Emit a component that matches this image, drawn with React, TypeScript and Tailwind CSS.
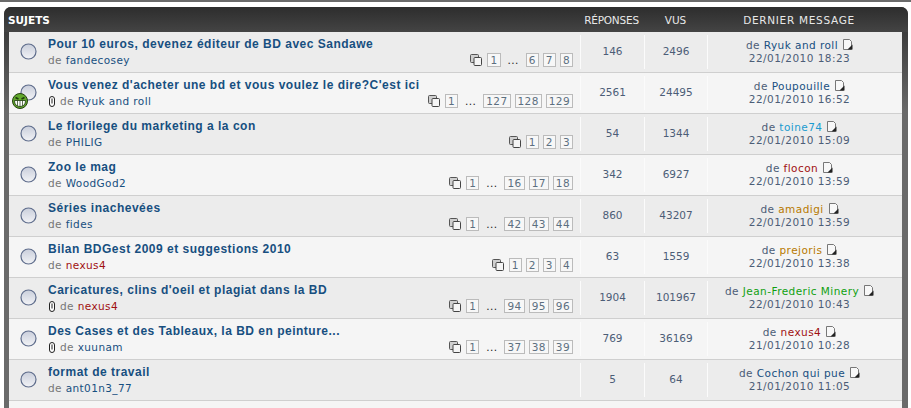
const font = "font-['DejaVu_Sans',sans-serif]";

type Topic = {
  title: string;
  author: string;
  authorColor?: string;
  clip?: boolean;
  pages?: string[];
  replies: string;
  views: string;
  last: string;
  lastColor?: string;
  date: string;
};

const topics: Topic[] = [
  { title: "Pour 10 euros, devenez éditeur de BD avec Sandawe", author: "fandecosey", pages: ["1", "...", "6", "7", "8"], replies: "146", views: "2496", last: "Ryuk and roll", date: "22/01/2010 18:23" },
  { title: "Vous venez d'acheter une bd et vous voulez le dire?C'est ici", author: "Ryuk and roll", clip: true, pages: ["1", "...", "127", "128", "129"], replies: "2561", views: "24495", last: "Poupouille", date: "22/01/2010 16:52" },
  { title: "Le florilege du marketing a la con", author: "PHILIG", pages: ["1", "2", "3"], replies: "54", views: "1344", last: "toine74", lastColor: "text-[#1a9bd0]", date: "22/01/2010 15:09" },
  { title: "Zoo le mag", author: "WoodGod2", pages: ["1", "...", "16", "17", "18"], replies: "342", views: "6927", last: "flocon", lastColor: "text-[#a01010]", date: "22/01/2010 13:59" },
  { title: "Séries inachevées", author: "fides", pages: ["1", "...", "42", "43", "44"], replies: "860", views: "43207", last: "amadigi", lastColor: "text-[#b87a00]", date: "22/01/2010 13:59" },
  { title: "Bilan BDGest 2009 et suggestions 2010", author: "nexus4", authorColor: "text-[#a01010]", pages: ["1", "2", "3", "4"], replies: "63", views: "1559", last: "prejoris", lastColor: "text-[#b87a00]", date: "22/01/2010 13:38" },
  { title: "Caricatures, clins d'oeil et plagiat dans la BD", author: "nexus4", authorColor: "text-[#a01010]", clip: true, pages: ["1", "...", "94", "95", "96"], replies: "1904", views: "101967", last: "Jean-Frederic Minery", lastColor: "text-[#10a010]", date: "22/01/2010 10:43" },
  { title: "Des Cases et des Tableaux, la BD en peinture...", author: "xuunam", clip: true, pages: ["1", "...", "37", "38", "39"], replies: "769", views: "36169", last: "nexus4", lastColor: "text-[#a01010]", date: "21/01/2010 10:28" },
  { title: "format de travail", author: "ant01n3_77", replies: "5", views: "64", last: "Cochon qui pue", date: "21/01/2010 11:05" },
];

function Bullet() {
  return (
    <svg width="17" height="17" viewBox="0 0 17 17">
      <defs>
        <linearGradient id="bulletFill" x1="0" y1="0" x2="0" y2="1">
          <stop offset="0" stopColor="#c9cedb" />
          <stop offset="1" stopColor="#f2f3f6" />
        </linearGradient>
      </defs>
      <circle cx="8.5" cy="8.5" r="7.5" fill="url(#bulletFill)" stroke="#5f6d8c" strokeWidth="1.2" />
    </svg>
  );
}

function Grin() {
  return (
    <svg width="16" height="16" viewBox="0 0 16 16">
      <circle cx="8" cy="8" r="7.5" fill="#62a82c" stroke="#24400f" strokeWidth="1" />
      <path d="M3.5 4.5 L6.5 6 M12.5 4.5 L9.5 6" stroke="#1d3a0c" strokeWidth="1.4" />
      <path d="M2.5 7.5 H13.5 Q13.5 13.5 8 13.5 Q2.5 13.5 2.5 7.5Z" fill="#fff" stroke="#1d3a0c" strokeWidth="0.8" />
      <path d="M5.5 7.5 V13 M8 7.5 V13.5 M10.5 7.5 V13" stroke="#1d3a0c" strokeWidth="0.7" />
    </svg>
  );
}

function Clip() {
  return (
    <svg width="6" height="11" viewBox="0 0 6 11" fill="none" stroke="#222" strokeWidth="1" className="ml-[1px]">
      <rect x="0.5" y="0.5" width="5" height="10" rx="2.5" fill="#fff" />
      <path d="M3 2.5 V7.5" />
    </svg>
  );
}

function PagesIcon() {
  return (
    <svg width="12" height="12" viewBox="0 0 12 12" className="mr-[1px]">
      <rect x="0.5" y="0.5" width="8" height="8" rx="1" fill="#cfcfcf" stroke="#555" />
      <rect x="4" y="3.5" width="7.5" height="8" rx="1" fill="#f5f5f5" stroke="#444" />
    </svg>
  );
}

function LastIcon() {
  return (
    <svg width="10" height="11" viewBox="0 0 10 11" className="ml-[5px] inline-block align-[-1px]">
      <path d="M.5.5 H6.5 L8.5 2.5 V10.5 H.5Z" fill="#f8f8f8" stroke="#777" />
      <path d="M4.5 10.5 L9.5 5.5 V10.5Z" fill="#222" />
    </svg>
  );
}

function Pager({ pages }: { pages: string[] }) {
  return (
    <div className="absolute right-[7px] bottom-[5px] flex items-center gap-[4px] text-[10.5px] leading-none tracking-[0.4px] text-[#5c6f80]">
      <PagesIcon />
      {pages.map((p, i) =>
        p === "..." ? (
          <span key={i} className="mx-[3px] text-[#222]">...</span>
        ) : (
          <span key={i} className="flex h-[14px] min-w-[13px] items-center justify-center border border-[#bbbbbb] bg-[#f7f7f7] px-[2px]">{p}</span>
        ),
      )}
    </div>
  );
}

function Row({ topic, odd, grin }: { topic: Topic; odd: boolean; grin: boolean }) {
  return (
    <div className={`grid h-[41px] grid-cols-[571px_64px_63px_1fr] border-b border-[#cfcfcf] ${odd ? "bg-[#ececec]" : "bg-[#f5f5f5]"}`}>
      <div className="relative flex items-start">
        <div className="relative flex w-[39px] shrink-0 justify-center pt-[11px] pr-[1px]">
          <Bullet />
          {grin && <div className="absolute left-[3px] top-[20px]"><Grin /></div>}
        </div>
        <div className="pt-[4px]">
          <div className="font-['Liberation_Sans',sans-serif] text-[12px] font-bold leading-[17px] whitespace-nowrap tracking-[0.5px] text-[#174f80]">{topic.title}</div>
          <div className="flex items-center gap-[5px] text-[10.5px] leading-[14px] tracking-[0.4px] text-[#777]">
            {topic.clip && <Clip />}
            <span>de <span className={topic.authorColor ?? "text-[#174f80]"}>{topic.author}</span></span>
          </div>
        </div>
        {topic.pages && <Pager pages={topic.pages} />}
      </div>
      {[topic.replies, topic.views].map((v, i) => (
        <div key={i} className="my-[3px] flex items-start justify-center border-l border-[#fbfbfb] pt-[9px] text-[10.5px] leading-[14px] text-[#4c5d77]">{v}</div>
      ))}
      <div className="my-[3px] border-l border-[#fbfbfb] pt-[4px] pr-[11px] text-center text-[10.5px] leading-[13px] tracking-[0.45px] text-[#4c5d77]">
        <div>de <span className={topic.lastColor ?? "text-[#174f80]"}>{topic.last}</span><LastIcon /></div>
        <div>{topic.date}</div>
      </div>
    </div>
  );
}

export default function App() {
  return (
    <div className={`h-[408px] w-[911px] overflow-hidden bg-white ${font}`}>
      <div className="h-[2px] bg-[#6a6a6a]" />
      <div className="mt-[5px] ml-[4px] mr-[3px] h-[420px] rounded-t-[7px] bg-gradient-to-b from-[#303030] via-[#6a6a6a] via-25% to-[#6a6a6a] px-[5px]">
        <div className="-mx-[5px] grid h-[25px] grid-cols-[571px_65px_63px_1fr] items-center rounded-t-[7px] bg-gradient-to-b from-[#2d2d2d] to-[#444444] pt-[2px] pl-[4px] pr-[5px] text-[10.5px] text-[#e8e8e8]">
          <span className="font-bold text-white">SUJETS</span>
          <span className="text-center tracking-[-0.2px]">RÉPONSES</span>
          <span className="text-center">VUS</span>
          <span className="pr-[12px] text-center tracking-[0.7px]">DERNIER MESSAGE</span>
        </div>
        <div className="mr-[1px]">
          {topics.map((t, i) => (
            <Row key={i} topic={t} odd={i % 2 === 0} grin={i === 1} />
          ))}
          <div className="h-[30px] bg-[#f5f5f5]" />
        </div>
      </div>
    </div>
  );
}
